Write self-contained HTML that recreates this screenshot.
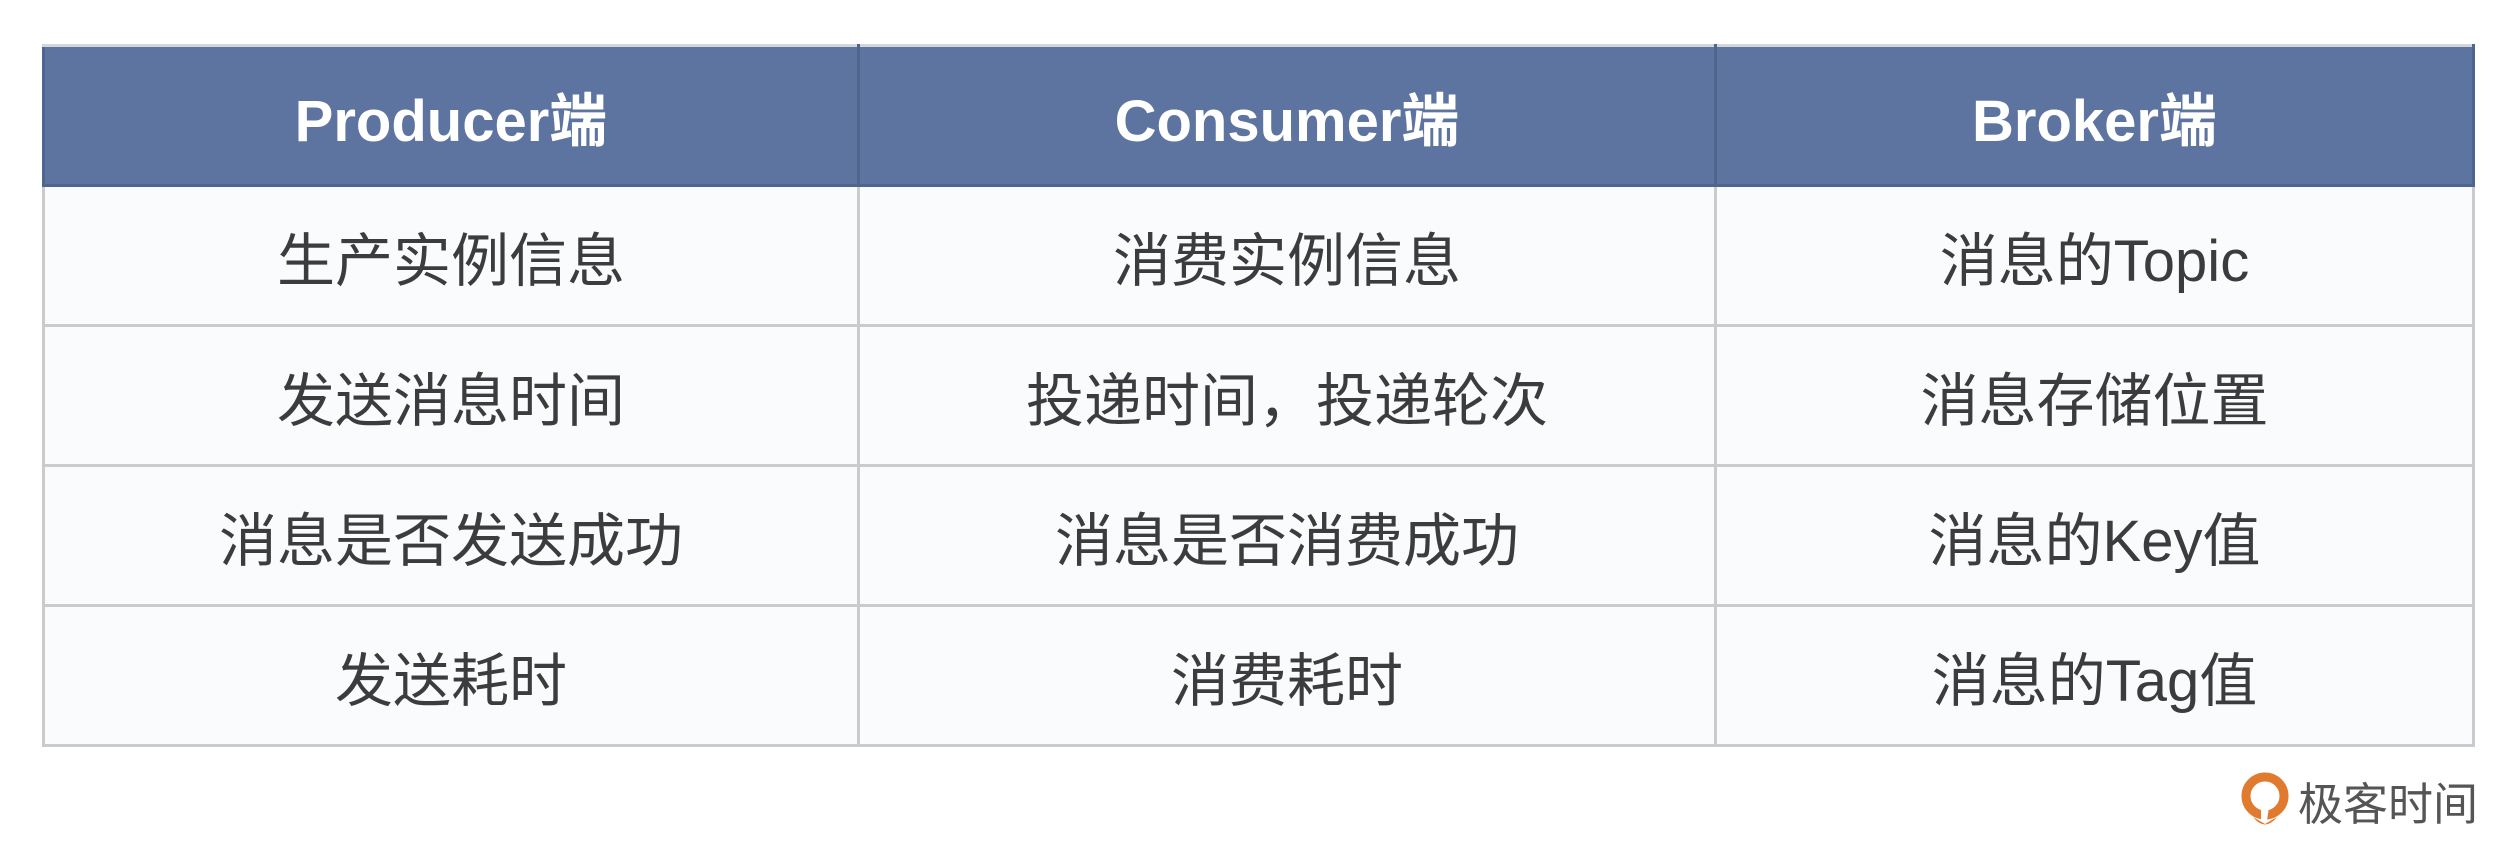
<!DOCTYPE html>
<html><head><meta charset="utf-8"><style>
html,body{margin:0;padding:0;background:#fff;width:2516px;height:852px;overflow:hidden}
table{position:absolute;left:42px;top:44px;width:2430px;border-collapse:collapse;table-layout:fixed;font-family:"Liberation Sans","Noto Sans CJK SC",sans-serif}
tr{height:140px}
td,th{border:3px solid #c9cbcd;text-align:center;padding:0;font-size:58px;color:#3c3c3e;background:#f9fbfd;font-weight:normal}
th{background:#5c749f;color:#fff;font-weight:bold;font-size:58px;border-color:#4e658f;border-top-color:#d3d6d9}
.logo{position:absolute;left:2240px;top:768px;display:flex;align-items:center;font-family:"Liberation Sans","Noto Sans CJK SC",sans-serif;font-size:45px;color:#555}
</style></head><body>
<table>
<colgroup><col style="width:815px"><col style="width:857px"><col style="width:758px"></colgroup>
<tr><th>Producer端</th><th>Consumer端</th><th>Broker端</th></tr>
<tr><td>生产实例信息</td><td>消费实例信息</td><td>消息的Topic</td></tr>
<tr><td>发送消息时间</td><td>投递时间，投递轮次</td><td>消息存储位置</td></tr>
<tr><td>消息是否发送成功</td><td>消息是否消费成功</td><td>消息的Key值</td></tr>
<tr><td>发送耗时</td><td>消费耗时</td><td>消息的Tag值</td></tr>
</table>
<div class="logo"><svg width="50" height="58" viewBox="0 0 50 58"><circle cx="25" cy="24" r="19" fill="none" stroke="#e07a2e" stroke-width="9"/><path d="M21 20 L30 29 L27 48 L21 48 Z" fill="#fff"/><path d="M13 45 Q25 60 37 45 L25 52 Z" fill="#e07a2e"/></svg><span style="margin-left:8px">极客时间</span></div>
</body></html>
